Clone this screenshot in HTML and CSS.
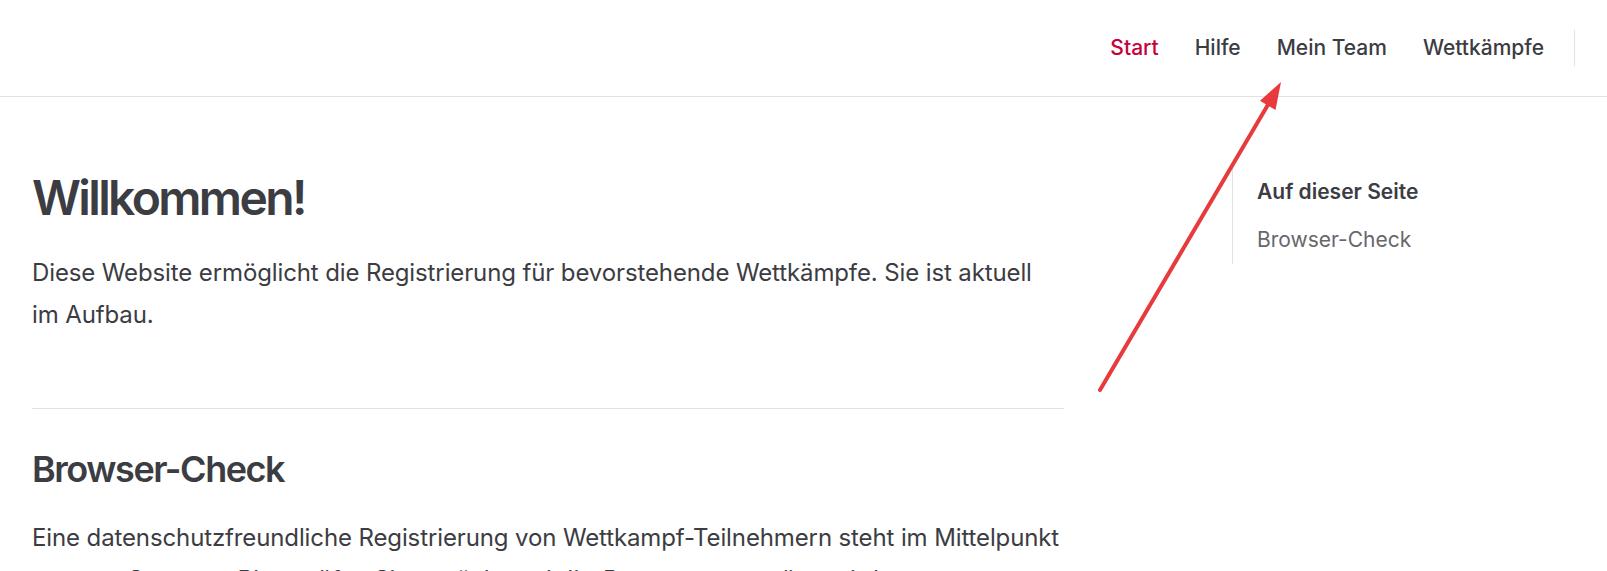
FILE: index.html
```html
<!DOCTYPE html>
<html lang="de">
<head>
<meta charset="utf-8">
<title>Willkommen!</title>
<link rel="stylesheet" href="styles.css">
</head>
<body>
<header class="nav">
  <nav class="menu">
    <a class="menu-link active" href="#">Start</a>
    <a class="menu-link" href="#">Hilfe</a>
    <a class="menu-link" href="#">Mein Team</a>
    <a class="menu-link" href="#">Wettkämpfe</a>
  </nav>
  <span class="nav-divider"></span>
</header>
<div class="page">
  <main class="doc">
    <h1>Willkommen!</h1>
    <p>Diese Website ermöglicht die Registrierung für bevorstehende Wettkämpfe. Sie ist aktuell im Aufbau.</p>
    <h2>Browser-Check</h2>
    <p>Eine datenschutzfreundliche Registrierung von Wettkampf-Teilnehmern steht im Mittelpunkt unseres Systems. Bitte prüfen Sie zunächst, ob Ihr Browser unterstützt wird.</p>
  </main>
  <aside class="aside">
    <div class="outline">
      <div class="outline-title">Auf dieser Seite</div>
      <a class="outline-link" href="#">Browser-Check</a>
    </div>
  </aside>
</div>
<svg class="annotation" width="1607" height="571" viewBox="0 0 1607 571" aria-hidden="true">
  <line x1="1100" y1="390" x2="1269" y2="103" stroke="#e8393c" stroke-width="4" stroke-linecap="round"/>
  <polygon points="1281,82 1275.5,110 1260,100.8" fill="#e8393c"/>
</svg>
</body>
</html>
```
FILE: styles.css
```css
* {
  box-sizing: border-box;
}

html,
body {
  margin: 0;
  padding: 0;
}

body {
  position: relative;
  font-family: Inter, "Noto Sans", "Liberation Sans", sans-serif;
  color: #3c3c43;
  background: #ffffff;
  overflow: hidden;
  height: 571px;
}

.nav {
  height: 97px;
  border-bottom: 1px solid #e2e2e3;
  display: flex;
  align-items: center;
  justify-content: flex-end;
  padding-right: 32px;
}

.menu {
  display: flex;
}

.menu-link {
  padding: 0 18px;
  line-height: 96px;
  font-size: 21px;
  font-weight: 500;
  color: #3c3c43;
  text-decoration: none;
}

.menu-link.active {
  color: #c8003c;
}

.nav-divider {
  width: 1px;
  height: 36px;
  margin-left: 12px;
  background: #e2e2e3;
}

.page {
  display: flex;
  padding: 71px 0 0 32px;
}

.doc {
  width: 1032px;
  flex: none;
}

.doc h1 {
  margin: 0;
  font-size: 48px;
  line-height: 60px;
  font-weight: 600;
  letter-spacing: -0.055em;
}

.doc p {
  margin: 24px 0;
  font-size: 24px;
  line-height: 42px;
  letter-spacing: -0.12px;
}

.doc h2 {
  margin: 72px 0 24px;
  padding-top: 36px;
  border-top: 1px solid #e2e2e3;
  font-size: 36px;
  line-height: 48px;
  font-weight: 600;
  letter-spacing: -0.04em;
}

.aside {
  margin-left: 168px;
}

.outline {
  border-left: 1px solid #e2e2e3;
  padding-left: 24px;
}

.outline-title {
  font-size: 21px;
  line-height: 48px;
  font-weight: 600;
}

.outline-link {
  display: block;
  font-size: 21px;
  line-height: 48px;
  font-weight: 400;
  color: #67676c;
  text-decoration: none;
}

.annotation {
  position: absolute;
  top: 0;
  left: 0;
  pointer-events: none;
}
```
